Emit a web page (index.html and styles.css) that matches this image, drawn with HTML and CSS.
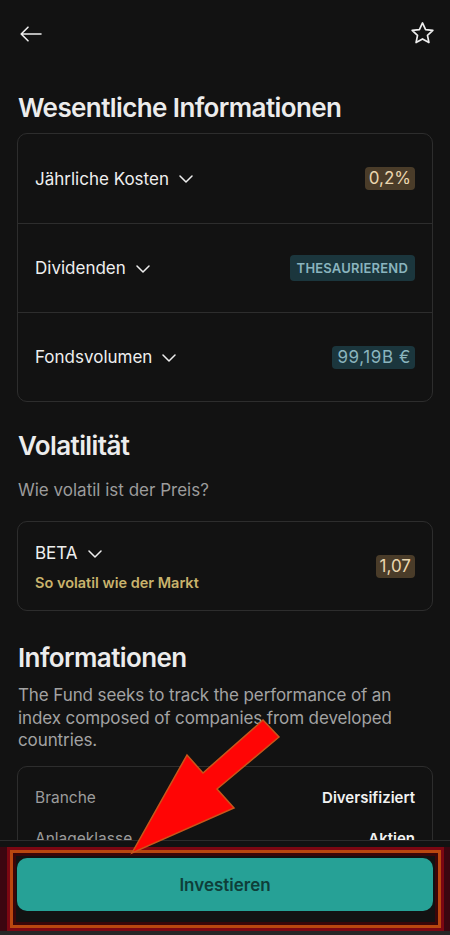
FILE: index.html
```html
<!DOCTYPE html>
<html lang="de">
<head>
<meta charset="utf-8">
<title>Fonds</title>
<link rel="stylesheet" href="styles.css">
</head>
<body>
<div class="app">
  <div class="scroll">
    <div class="topbar">
      <svg class="icon-back" width="22" height="16" viewBox="0 0 22 16" fill="none" stroke="#eeeeee" stroke-width="1.6" stroke-linecap="round" stroke-linejoin="round"><path d="M21 8H1.5M8 1.2L1.2 8L8 14.8"/></svg>
      <svg class="icon-star" width="27" height="27" viewBox="0 0 24 24" fill="none" stroke="#eeeeee" stroke-width="1.5" stroke-linejoin="round"><path d="M12 2.6l2.75 5.9 6.45.75-4.77 4.4 1.27 6.38L12 16.8l-5.7 3.23 1.27-6.38L2.8 9.25l6.45-.75z"/></svg>
    </div>

    <h2 class="title t1">Wesentliche Informationen</h2>
    <div class="card list">
      <div class="row">
        <div class="label">Jährliche Kosten <svg class="chev" width="14" height="8" viewBox="0 0 14 8" fill="none" stroke="#eeeeee" stroke-width="1.5" stroke-linecap="round" stroke-linejoin="round"><path d="M1 1l6 6 6-6"/></svg></div>
        <span class="badge brown">0,2%</span>
      </div>
      <div class="row">
        <div class="label">Dividenden <svg class="chev" width="14" height="8" viewBox="0 0 14 8" fill="none" stroke="#eeeeee" stroke-width="1.5" stroke-linecap="round" stroke-linejoin="round"><path d="M1 1l6 6 6-6"/></svg></div>
        <span class="badge teal caps">THESAURIEREND</span>
      </div>
      <div class="row">
        <div class="label">Fondsvolumen <svg class="chev" width="14" height="8" viewBox="0 0 14 8" fill="none" stroke="#eeeeee" stroke-width="1.5" stroke-linecap="round" stroke-linejoin="round"><path d="M1 1l6 6 6-6"/></svg></div>
        <span class="badge teal wide">99,19B €</span>
      </div>
    </div>

    <h2 class="title t2">Volatilität</h2>
    <p class="sub">Wie volatil ist der Preis?</p>
    <div class="card beta">
      <div class="beta-text">
        <div class="label">BETA <svg class="chev" width="14" height="8" viewBox="0 0 14 8" fill="none" stroke="#eeeeee" stroke-width="1.5" stroke-linecap="round" stroke-linejoin="round"><path d="M1 1l6 6 6-6"/></svg></div>
        <div class="gold">So volatil wie der Markt</div>
      </div>
      <span class="badge brown">1,07</span>
    </div>

    <h2 class="title t3">Informationen</h2>
    <p class="desc">The Fund seeks to track the performance of an index composed of companies from developed countries.</p>
    <div class="card facts">
      <div class="fact"><span class="fk">Branche</span><span class="fv">Diversifiziert</span></div>
      <div class="fact"><span class="fk">Anlageklasse</span><span class="fv">Aktien</span></div>
    </div>
  </div>

  <div class="footer">
    <button class="cta">Investieren</button>
  </div>
  <div class="navstrip"></div>

  <div class="mark"></div>
  <svg class="arrow" width="450" height="935" viewBox="0 0 450 935"><polygon points="263,720 279,737 217,789 234,808 132,853 187,755 203,773" fill="#ff0505" stroke="#c9561a" stroke-width="1.5" stroke-linejoin="miter"/></svg>
</div>
</body>
</html>
```

FILE: styles.css
```css
* { box-sizing: border-box; }
html, body { margin: 0; padding: 0; }
body {
  background: #121212;
  font-family: Inter, "Noto Sans", "Liberation Sans", sans-serif;
  color: #efefef;
}
.app {
  position: relative;
  width: 450px;
  height: 935px;
  display: flex;
  flex-direction: column;
  overflow: hidden;
  background: #121212;
}
.scroll {
  flex: 1;
  overflow: hidden;
  padding: 0 17px;
}
.topbar {
  height: 68px;
  display: flex;
  align-items: center;
  justify-content: space-between;
  padding: 0 0 0 3px;
}
.icon-star { margin-top: -2px; margin-right: -3px; }

.title {
  margin: 0;
  font-size: 26px;
  line-height: 32px;
  font-weight: 600;
  letter-spacing: -0.6px;
  color: #ececec;
  padding-left: 1px;
}
.t1 { margin-top: 24px; }
.t2 { margin-top: 28px; }
.t3 { margin-top: 31px; }

.card {
  border: 1px solid #2d2d2d;
  border-radius: 10px;
}
.list { margin-top: 9px; }
.row {
  height: 89px;
  display: flex;
  align-items: center;
  justify-content: space-between;
  padding: 0 17px 0 17px;
}
.row + .row { border-top: 1px solid #2d2d2d; }

.label {
  display: flex;
  align-items: center;
  gap: 10px;
  font-size: 17px;
  line-height: 22px;
  color: #efefef;
}
.chev { margin-top: 1px; }

.badge {
  font-size: 17px;
  line-height: 23px;
  padding: 0 4px;
  border-radius: 4px;
}
.brown { background: #4a3c29; color: #ead6af; }
.teal { background: #1b363d; color: #8ab4be; }
.caps { font-size: 13px; font-weight: 600; line-height: 26px; padding: 0 7px; letter-spacing: 0.2px; }
.wide { letter-spacing: 0.6px; padding: 0 4px 0 5px; }

.sub {
  margin: 16px 0 0;
  font-size: 17px;
  line-height: 24px;
  color: #9c9c9c;
  padding-left: 1px;
}
.beta {
  margin-top: 19px;
  height: 90px;
  display: flex;
  align-items: center;
  justify-content: space-between;
  padding: 0 17px;
}
.beta-text { display: flex; flex-direction: column; gap: 9px; margin-top: 3px; }
.gold { color: #c9b36c; font-size: 14.5px; font-weight: 600; line-height: 20px; }

.desc {
  margin: 10px 0 0;
  font-size: 17px;
  line-height: 22.5px;
  letter-spacing: -0.1px;
  color: #a3a3a3;
  padding-left: 1px;
}
.facts {
  margin-top: 14px;
  padding: 10px 17px 0;
}
.fact {
  display: flex;
  justify-content: space-between;
  align-items: center;
  height: 41px;
  font-size: 15px;
}
.fk { color: #9c9c9c; font-size: 15.5px; }
.fv { color: #f2f2f2; font-weight: 600; }

.footer {
  flex: none;
  height: 88px;
  border-top: 1px solid #2c2c2c;
  background: #121212;
  padding: 17px 17px 0;
}
.cta {
  display: block;
  width: 100%;
  height: 53px;
  border: none;
  border-radius: 10px;
  background: #26a196;
  color: #0e3e39;
  font-family: inherit;
  font-size: 17px;
  font-weight: 600;
}
.navstrip { flex: none; height: 7px; background: #262626; }

.mark {
  position: absolute;
  left: 10px;
  top: 850px;
  width: 431px;
  height: 78px;
  border: 3px solid #b9470f;
  box-shadow: 0 0 0 3px #7c0712, inset 0 0 0 3px #3a0609, -10px 0 0 3px #3c0610, 10px 0 0 3px #3c0610;
  pointer-events: none;
}
.arrow {
  position: absolute;
  left: 0;
  top: 0;
  pointer-events: none;
}
```
